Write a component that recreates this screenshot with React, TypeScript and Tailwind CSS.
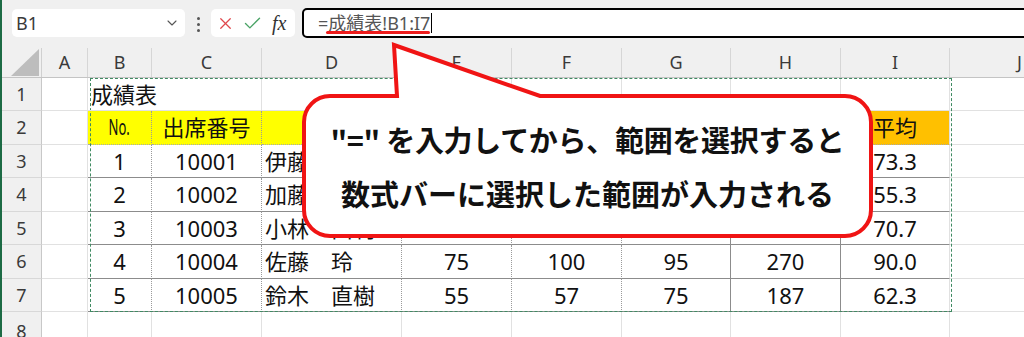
import React from 'react';
import { ChevronDown, X, Check } from 'lucide-react';

type Cell = { t?: string; a?: 'c' | 'l'; bg?: string; r: string; b: string; nar?: boolean; ov?: boolean };

const R_LIGHT = 'border-r border-r-[#e1e1e1]';
const R_DOT = 'border-r border-r-[#9a9a9a] [border-right-style:dotted]';
const R_DARK = 'border-r border-r-[#8c8c8c]';
const R_NONE = '';
const B_LIGHT = 'border-b border-b-[#e1e1e1]';
const B_DOT = 'border-b border-b-[#a8a8a8] [border-bottom-style:dotted]';
const B_DARK = 'border-b border-b-[#8c8c8c]';

const COL_W = ['w-[46px]', 'w-[64px]', 'w-[110px]', 'w-[140px]', 'w-[110px]', 'w-[110px]', 'w-[109px]', 'w-[110px]', 'w-[109px]', 'w-[140px]'];
const LETTERS = ['A', 'B', 'C', 'D', 'E', 'F', 'G', 'H', 'I', 'J'];
const ROW_H = ['h-[33px]', 'h-[34px]', 'h-[33px]', 'h-[34px]', 'h-[33px]', 'h-[34px]', 'h-[33px]', 'h-[40px]'];

const TB_R = [R_DOT, R_DOT, R_DOT, R_DOT, R_DOT, R_DARK, R_DARK, R_LIGHT];

function dataRow(vals: string[], bBottom: string, header: boolean, bgs?: string[]): Cell[] {
  const cells: Cell[] = [{ r: R_LIGHT, b: B_LIGHT }];
  vals.forEach((v, i) => {
    cells.push({
      t: v,
      a: i === 2 && !header ? 'l' : 'c',
      r: TB_R[i],
      b: bBottom,
      bg: bgs ? bgs[i] : undefined,
      nar: header && i === 0,
    });
  });
  cells.push({ r: R_LIGHT, b: B_LIGHT });
  return cells;
}

const Y = 'bg-[#ffff00]';
const O = 'bg-[#ffc000]';

const ROWS: Cell[][] = [
  [
    { r: R_LIGHT, b: B_LIGHT },
    { t: '成績表', a: 'l', r: R_NONE, b: B_LIGHT, ov: true },
    { r: R_LIGHT, b: B_LIGHT },
    { r: R_LIGHT, b: B_LIGHT },
    { r: R_LIGHT, b: B_LIGHT },
    { r: R_LIGHT, b: B_LIGHT },
    { r: R_LIGHT, b: B_LIGHT },
    { r: R_LIGHT, b: B_LIGHT },
    { r: R_LIGHT, b: B_LIGHT },
    { r: R_LIGHT, b: B_LIGHT },
  ],
  dataRow(['No.', '出席番号', '氏名', '国語', '数学', '英語', '合計', '平均'], B_DOT, true, [Y, Y, Y, Y, Y, Y, Y, O]),
  dataRow(['1', '10001', '伊藤　美咲', '70', '80', '70', '220', '73.3'], B_DARK, false),
  dataRow(['2', '10002', '加藤　健太', '50', '60', '56', '166', '55.3'], B_DARK, false),
  dataRow(['3', '10003', '小林　由利', '75', '66', '71', '212', '70.7'], B_DARK, false),
  dataRow(['4', '10004', '佐藤　玲', '75', '100', '95', '270', '90.0'], B_DARK, false),
  dataRow(['5', '10005', '鈴木　直樹', '55', '57', '75', '187', '62.3'], B_DARK, false),
  LETTERS.map(() => ({ r: R_LIGHT, b: B_LIGHT })),
];

export default function App() {
  return (
    <div className="relative w-[1024px] h-[337px] overflow-hidden bg-white border-l-2 border-l-[#1d6b45] font-['Noto_Sans','Noto_Sans_CJK_JP',sans-serif] text-[#111]">
      {/* toolbar */}
      <div className="flex items-start h-[48px] bg-[#f0f0f0] pl-[10px] pt-[8px]">
        <div className="shrink-0 mt-[1px] w-[173px] h-[28px] rounded-[5px] bg-white flex items-center justify-between pl-[4px] pr-[5px]">
          <span className="text-[18px] leading-none text-[#3a3a3a]">B1</span>
          <ChevronDown size={16} strokeWidth={1.6} color="#555" />
        </div>
        <div className="shrink-0 ml-[12px] mt-[9px] flex flex-col gap-[3px]">
          <div className="w-[3px] h-[3px] rounded-full bg-[#555]" />
          <div className="w-[3px] h-[3px] rounded-full bg-[#555]" />
          <div className="w-[3px] h-[3px] rounded-full bg-[#555]" />
        </div>
        <div className="shrink-0 ml-[11px] mt-[1px] w-[84px] h-[28px] rounded-[5px] bg-white flex items-center pl-[5px]">
          <X size={19} strokeWidth={1.6} color="#e0474c" />
          <Check size={21} strokeWidth={1.6} color="#4aa366" className="ml-[7px]" />
          <span className="ml-[9px] font-['Liberation_Serif',serif] italic text-[20px] leading-none text-[#333]">fx</span>
        </div>
        <div className="relative shrink-0 ml-[7px] w-[760px] h-[30px] rounded-[5px] border-2 border-black bg-white flex items-center pl-[14px]">
          <span className="text-[18px] leading-none text-[#555]">=成績表!B1:I7</span>
          <span className="ml-[1px] w-[1px] h-[20px] bg-black" />
          <div className="absolute left-[22px] top-[21px] w-[104px] h-[3px] rounded-full bg-[#ee1c1c]" />
        </div>
      </div>

      {/* column headers */}
      <div className="flex h-[30px] bg-[#f0f0f0] border-b border-b-[#c4c4c4]">
        <div className="w-[40px] shrink-0 h-full border-r border-r-[#d0d0d0] flex items-end justify-end pr-[2px] pb-[1px]">
          <svg width="28" height="27" viewBox="0 0 28 27">
            <polygon points="28,0 28,27 0,27" fill="#bdbdbd" />
          </svg>
        </div>
        {LETTERS.map((l, i) => (
          <div key={l} className={`${COL_W[i]} shrink-0 h-full border-r border-r-[#d6d6d6] flex items-center justify-center text-[18px] text-[#3a3a3a]`}>
            {l}
          </div>
        ))}
      </div>

      {/* rows */}
      {ROWS.map((row, ri) => (
        <div key={ri} className={`flex ${ROW_H[ri]}`}>
          <div className="w-[40px] shrink-0 h-full bg-[#f0f0f0] border-r border-r-[#c8c8c8] border-b border-b-[#d8d8d8] flex items-center justify-center text-[18px] text-[#3a3a3a]">
            {ri + 1}
          </div>
          {row.map((c, ci) => (
            <div
              key={ci}
              className={`${COL_W[ci]} shrink-0 h-full flex items-center ${c.a === 'l' ? 'justify-start pl-[3px]' : 'justify-center'} ${c.bg ?? ''} ${c.r} ${c.b} ${c.ov ? 'overflow-visible relative z-[1]' : 'overflow-hidden'} whitespace-nowrap text-[22px] text-[#111]`}
            >
              {c.nar ? <span className="inline-block scale-x-[0.62] text-[21px]">{c.t}</span> : c.t}
            </div>
          ))}
        </div>
      ))}

      {/* selection marching ants */}
      <div className="absolute left-[88px] top-[78px] w-[862px] h-[234px] border border-dashed border-[#3f8a62] pointer-events-none" />

      {/* callout */}
      <svg className="absolute left-0 top-0 pointer-events-none" width="1024" height="337" viewBox="0 0 1024 337">
        <path
          d="M 328 96 L 395 96 L 392 45 L 538 96 L 843 96 A 26 26 0 0 1 869 122 L 869 210 A 26 26 0 0 1 843 236 L 328 236 A 26 26 0 0 1 302 210 L 302 122 A 26 26 0 0 1 328 96 Z"
          fill="#ffffff"
          stroke="#f01414"
          strokeWidth="4"
          strokeLinejoin="miter"
        />
      </svg>
      <div className="absolute left-[302px] top-[96px] w-[567px] h-[140px] flex flex-col items-center justify-center font-['Noto_Sans_CJK_JP',sans-serif] font-bold text-[29px] leading-[54px] text-[#111]">
        <div className="tracking-[-0.3px]">"=" を入力してから、範囲を選択すると</div>
        <div>数式バーに選択した範囲が入力される</div>
      </div>
    </div>
  );
}
